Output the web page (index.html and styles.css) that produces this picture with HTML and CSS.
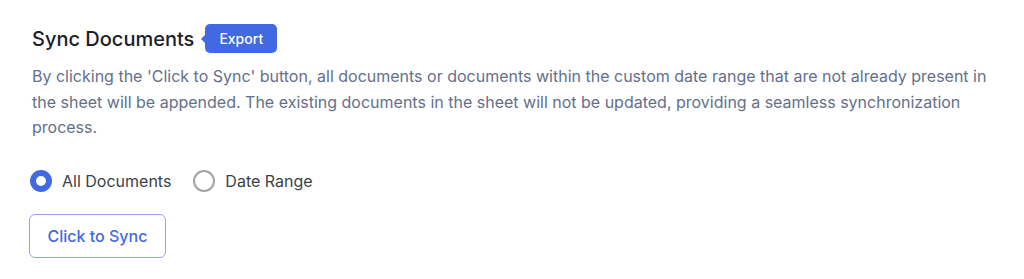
FILE: index.html
```html
<!DOCTYPE html>
<html lang="en">
<head>
  <meta charset="UTF-8" />
  <meta name="viewport" content="width=device-width, initial-scale=1.0" />
  <title>Sync Documents</title>
  <link rel="stylesheet" href="styles.css">
</head>
<body>
  <div class="panel">
    <div class="title-row">
      <h2>Sync Documents</h2>
      <span class="badge">Export</span>
    </div>
    <p class="desc">By clicking the 'Click to Sync' button, all documents or documents within the custom date range that are not already present in the sheet will be appended. The existing documents in the sheet will not be updated, providing a seamless synchronization process.</p>

    <div class="options">
      <label class="radio checked">
        <span class="dot"></span>
        All Documents
      </label>
      <label class="radio">
        <span class="dot"></span>
        Date Range
      </label>
    </div>

    <button class="sync-btn">Click to Sync</button>
  </div>
</body>
</html>
```

FILE: styles.css
```css
body {
  margin: 0;
  background: #ffffff;
  font-family: Inter, "Noto Sans", sans-serif;
}

.panel {
  padding: 24px 32px 0 32px;
  width: 960px;
}

.title-row {
  display: flex;
  align-items: center;
  gap: 11px;
}

h2 {
  margin: 0;
  font-size: 20px;
  font-weight: 500;
  color: #1c1e29;
}

.badge {
  position: relative;
  background: #4169e1;
  color: #fff;
  font-size: 14px;
  font-weight: 500;
  padding: 5px 14px;
  border-radius: 5px;
  line-height: 19px;
}

.badge::before {
  content: "";
  position: absolute;
  left: -4px;
  top: 50%;
  margin-top: -5px;
  border-top: 5px solid transparent;
  border-bottom: 5px solid transparent;
  border-right: 5px solid #4169e1;
}

.desc {
  margin: 11px 0 0 0;
  font-size: 16px;
  line-height: 25.5px;
  color: #64708a;
}

.options {
  display: flex;
  gap: 22px;
  margin-top: 29px;
  margin-left: -2px;
}

.radio {
  display: flex;
  align-items: center;
  gap: 10px;
  font-size: 16px;
  color: #3b3f4a;
}

.dot {
  width: 22px;
  height: 22px;
  box-sizing: border-box;
  border-radius: 50%;
  border: 2px solid #a3a3a3;
}

.radio.checked .dot {
  border: 6.5px solid #4169e1;
}

.sync-btn {
  margin-top: 22px;
  margin-left: -3px;
  font-family: inherit;
  font-size: 16px;
  font-weight: 500;
  color: #4169e1;
  background: #fff;
  border: 1px solid #8fa6ee;
  border-radius: 6px;
  padding: 0;
  height: 44px;
  width: 137px;
}
```
